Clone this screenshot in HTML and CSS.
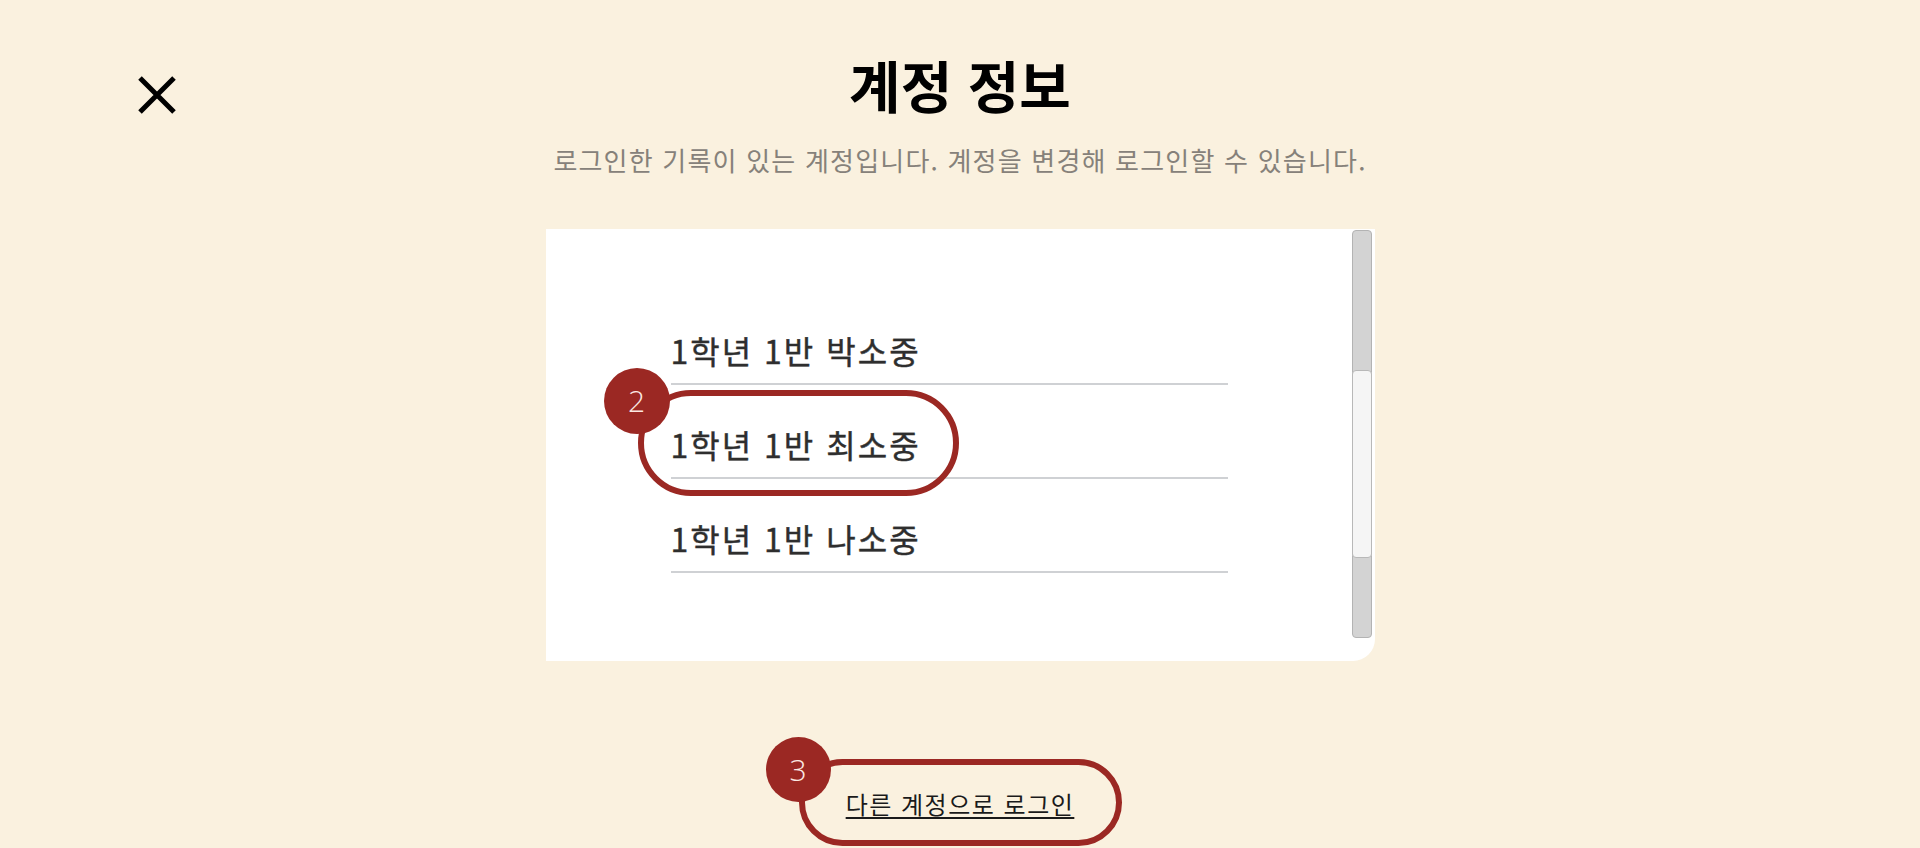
FILE: index.html
```html
<!DOCTYPE html>
<html lang="ko">
    <head>
        <meta charset="utf-8">
        <meta name="viewport" content="width=device-width, initial-scale=1.0">
        <title>계정 정보</title>
        <link rel="stylesheet" href="styles.css">
    </head>
    <body>
        <header class="top">
            <button class="close" type="button" aria-label="닫기">
                <svg width="40" height="40" viewBox="0 0 40 40"><path d="M3 3 L37 37 M37 3 L3 37" stroke="#000" stroke-width="5" fill="none"/></svg>
            </button>
            <h1 class="title">계정 정보</h1>
            <p class="subtitle">로그인한 기록이 있는 계정입니다. 계정을 변경해 로그인할 수 있습니다.</p>
        </header>

        <section class="accounts">
            <ul class="account-list">
                <li class="account">1학년 1반 박소중</li>
                <li class="account">
                    <span class="callout"><span class="badge">2</span></span>
                    1학년 1반 최소중
                </li>
                <li class="account">1학년 1반 나소중</li>
            </ul>
            <div class="scrollbar"><div class="thumb"></div></div>
        </section>

        <div class="other">
            <div class="other-ring">
                <span class="badge">3</span>
                <a href="#" class="other-link">다른 계정으로 로그인</a>
            </div>
        </div>
    </body>
</html>
```

FILE: styles.css
```css
body {
    margin: 0;
    height: 848px;
    overflow: hidden;
    background: #faf1df;
    font-family: "Noto Sans CJK KR", "Noto Sans", sans-serif;
    color: #000;
}

.top {
    position: relative;
    padding-top: 56px;
    text-align: center;
}

.close {
    position: absolute;
    left: 137px;
    top: 75px;
    width: 40px;
    height: 40px;
    padding: 0;
    border: 0;
    background: none;
}

.close svg {
    display: block;
}

.title {
    margin: 0;
    font-size: 56px;
    line-height: 1;
    font-weight: 700;
}

.subtitle {
    margin: 35px 0 0;
    font-size: 26px;
    line-height: 1;
    letter-spacing: 1.2px;
    color: #86817a;
}

.accounts {
    display: flex;
    box-sizing: border-box;
    width: 829px;
    height: 432px;
    margin: 56px auto 0;
    background: #fff;
    border-radius: 0 0 22px 0;
}

.account-list {
    list-style: none;
    width: 557px;
    margin: 0;
    padding: 62px 0 0 125px;
}

.account {
    position: relative;
    display: flex;
    align-items: flex-end;
    box-sizing: border-box;
    height: 94px;
    padding-bottom: 17px;
    border-bottom: 2px solid #cfd1d4;
    font-size: 32px;
    line-height: 1;
    letter-spacing: 2px;
    color: #2e2e2e;
    -webkit-text-stroke: 0.4px #2e2e2e;
}

.callout {
    position: absolute;
    left: -33px;
    top: 5px;
    width: 321px;
    height: 106px;
    box-sizing: border-box;
    border: 6px solid #9b2823;
    border-radius: 53px;
}

.badge {
    position: absolute;
    left: -40px;
    top: -28px;
    width: 66px;
    height: 66px;
    border-radius: 50%;
    background: #9b2823;
    color: #fbe9e3;
    font-family: "Open Sans", "Noto Sans", sans-serif;
    font-size: 30px;
    font-weight: 300;
    line-height: 66px;
    letter-spacing: 0;
    text-align: center;
    -webkit-text-stroke: 0;
}

.scrollbar {
    position: relative;
    box-sizing: border-box;
    width: 20px;
    height: 408px;
    margin: 1px 3px 0 auto;
    background: #d3d3d3;
    border: 1px solid #b3b3b3;
    border-radius: 4px;
}

.thumb {
    position: absolute;
    left: -1px;
    right: -1px;
    top: 139px;
    height: 188px;
    box-sizing: border-box;
    background: #f5f5f5;
    border: 1px solid #b8b8b8;
    border-radius: 4px;
}

.other {
    display: flex;
    justify-content: center;
    margin-top: 98px;
}

.other-ring {
    position: relative;
    box-sizing: border-box;
    width: 323px;
    height: 87px;
    padding-top: 27px;
    border: 6px solid #9b2823;
    border-radius: 44px;
    text-align: center;
}

.other-ring .badge {
    left: -39px;
    top: -28px;
    width: 65px;
    height: 65px;
    line-height: 65px;
}

.other-link {
    font-size: 24px;
    line-height: 1;
    letter-spacing: 1.5px;
    color: #1a1a1a;
    text-decoration: underline;
    text-decoration-thickness: 2px;
    text-underline-offset: 3px;
}
```
